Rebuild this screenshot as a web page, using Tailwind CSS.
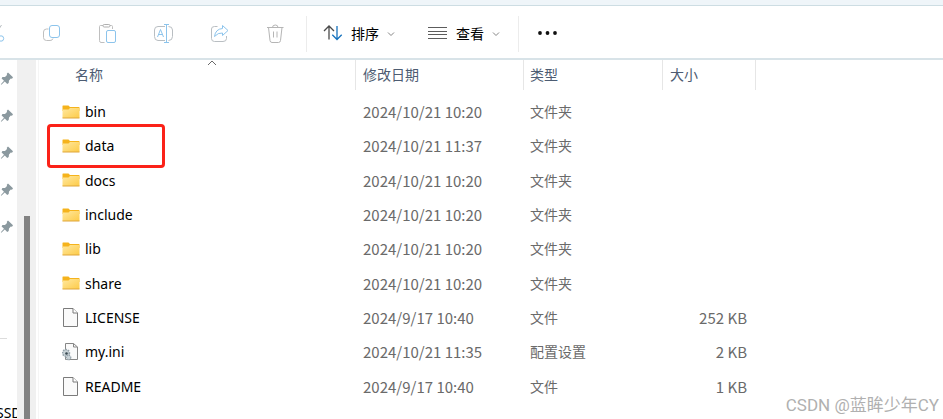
<!DOCTYPE html>
<html lang="zh-CN">
<head>
    <meta charset="UTF-8">
    <meta name="viewport" content="width=device-width, initial-scale=1.0">
    <title>文件资源管理器</title>
    <script src="https://cdn.jsdelivr.net/npm/@tailwindcss/browser@4"></script>
</head>
<body class="flex h-screen flex-col overflow-hidden bg-white font-['Noto_Sans','Noto_Sans_CJK_SC',sans-serif] text-sm text-black">
    <!-- 图标定义 -->
    <svg class="absolute size-0">
        <defs>
            <linearGradient id="folderFill" x1="0" y1="0" x2="1" y2="1">
                <stop offset="0" stop-color="#ffe8a0"/>
                <stop offset="1" stop-color="#fdcb48"/>
            </linearGradient>
        </defs>
        <symbol id="folder" viewBox="0 0 18 15">
            <path d="M.5 1Q.5 .5 1 .5H6.5L8 2H17Q17.500 2 17.500 2.500V6H.5Z" fill="#f5b31c"/>
            <path d="M.5 4.500H6.500L8 3H17.500V12.500Q17.500 13 17 13H1Q.5 13 .5 12.500Z" fill="url(#folderFill)"/>
            <path d="M.5 13H17.500" stroke="#dfa63a" stroke-width="1"/>
        </symbol>
        <symbol id="file" viewBox="0 0 18 20">
            <path d="M1.500.5H11L15.500 5V18.500H1.500Z" fill="#fafafa" stroke="#7b7b7b"/>
            <path d="M11 .5V5H15.500" fill="#fff" stroke="#7b7b7b"/>
        </symbol>
        <symbol id="ini" viewBox="0 0 18 20">
            <path d="M3.500 1.500H11.500L15.500 5V17.500H3.500Z" fill="#fafafa" stroke="#868686"/>
            <path d="M11.500 1.500V5H15.500" fill="none" stroke="#868686"/>
            <circle cx="4" cy="11" r="3.400" fill="#c9d3d8" stroke="#94a2aa" stroke-width="1.600" stroke-dasharray="1.5 1"/>
            <circle cx="4.500" cy="11.500" r="1.300" fill="#37474f"/>
            <circle cx="6.500" cy="15.500" r="2.300" fill="#c9d3d8" stroke="#94a2aa" stroke-width="1.200" stroke-dasharray="1.2 .8"/>
        </symbol>
        <symbol id="pin" viewBox="0 0 14 14">
            <path d="M8 .5 13 5.200 12 6.800 10.800 6.500 9 8.500 8.700 11 7.200 12 4.800 9.500 1.300 12.700 .8 12.300 4 8.700 1.600 6.400 2.400 5 5 4.900 7 2.900 6.800 1.800Z" fill="#8b999f"/>
        </symbol>
        <symbol id="chevron" viewBox="0 0 8 8">
            <path d="M1 2.500 4 5.500 7 2.500" fill="none" stroke="#858585"/>
        </symbol>
    </svg>

    <div class="h-[5px] shrink-0 bg-[#eff5f9]"></div>

    <!-- 工具栏 -->
    <div class="flex h-[55px] shrink-0 items-center border-t border-b-2 border-t-[#cddde3] border-b-[#d8e3e8] pt-1">
        <button class="-ml-8 flex w-14 justify-center" aria-label="剪切">
            <svg class="size-5" viewBox="0 0 20 20" fill="none">
                <path d="M5 1 13 13M15.500 1 8 13" stroke="#b9bec2"/>
                <circle cx="5.500" cy="14.500" r="2.700" stroke="#8cc4ec"/>
                <circle cx="15" cy="14.500" r="2.700" stroke="#8cc4ec"/>
            </svg>
        </button>
        <button class="flex w-14 justify-center" aria-label="复制">
            <svg class="size-5" viewBox="0 0 20 20" fill="none">
                <path d="M6.500 5H4.500Q1.500 5 1.500 8V13.500Q1.500 16.500 4.500 16.500H8Q10.500 16.500 11 14.500" stroke="#bfbfbf"/>
                <rect x="7.500" y="1.500" width="10" height="12" rx="2.500" stroke="#8cc4ec"/>
            </svg>
        </button>
        <button class="flex w-14 justify-center" aria-label="粘贴">
            <svg class="size-5" viewBox="0 0 20 20" fill="none">
                <path d="M5 1.500H2.500Q1.500 1.500 1.500 2.500V16.500Q1.500 18.500 3 18.500H6.500M12 1.500H13.500Q14.500 1.500 14.500 2.500V5" stroke="#bfbfbf"/>
                <rect x="5" y=".5" width="7" height="2.500" rx="1.200" stroke="#b0b0b0"/>
                <rect x="8.500" y="6.500" width="9" height="12" rx="1.500" stroke="#8cc4ec"/>
            </svg>
        </button>
        <button class="flex w-14 justify-center" aria-label="重命名">
            <svg class="size-5" viewBox="0 0 20 20" fill="none">
                <path d="M11 2.500H4Q.5 2.500 .5 6V12.500Q.5 16.500 4 16.500H11M14.500 2.500Q18.500 2.500 18.500 6V12.500Q18.500 16.500 14.500 16.500" stroke="#b9bec2"/>
                <path d="M3.500 13 6.500 5.500 9.500 13M4.500 10.500H8.500M12.500 .5V18.500M10 .5H15M10 18.500H15" stroke="#8cc4ec"/>
            </svg>
        </button>
        <button class="flex w-14 justify-center" aria-label="共享">
            <svg class="size-5" viewBox="0 0 20 20" fill="none" stroke-linejoin="round">
                <path d="M7.500 2.500H4.500Q1.500 2.500 1.500 5V14.500Q1.500 17.500 4.500 17.500H13Q16.500 17.500 16.500 14.500V12" stroke="#b9bec2"/>
                <path d="M12.500 1.500 18 6.500 12.500 11.500V9Q8 8.500 4.500 12.500Q5.500 5 12.500 4.500Z" stroke="#8cc4ec"/>
            </svg>
        </button>
        <button class="flex w-14 justify-center" aria-label="删除">
            <svg class="size-5" viewBox="0 0 20 20" fill="none" stroke="#b5b5b5">
                <path d="M1 3.500H17.500M6.500 3.500Q6.500 1 9.300 1Q12 1 12 3.500M2.500 3.500 4 16.500Q4.200 18.500 6 18.500H12.500Q14.300 18.500 14.500 16.500L16 3.500M7.500 7.500V13.500M11 7.500V13.500"/>
            </svg>
        </button>
        <div class="ml-0.5 h-9 w-px bg-[#ececec]"></div>
        <button class="ml-4 flex items-center">
            <svg class="size-5" viewBox="0 0 20 20" fill="none" stroke-width="1.300">
                <path d="M6 15.500V2M1 7 6 2 11 7" stroke="#4a4a4a"/>
                <path d="M14 2V15.500M9.300 10.800 14 15.500 18.700 10.800" stroke="#1672bd"/>
            </svg>
            <span class="ml-2">排序</span>
            <svg class="ml-2 size-2"><use href="#chevron"/></svg>
        </button>
        <button class="ml-[33px] flex items-center">
            <svg class="size-5" viewBox="0 0 20 20" stroke="#5c5c5c">
                <path d="M0 3.500H19M0 7.500H19M0 10.500H19M0 14.500H19"/>
            </svg>
            <span class="ml-2">查看</span>
            <svg class="ml-2 size-2"><use href="#chevron"/></svg>
        </button>
        <div class="ml-[18px] h-9 w-px bg-[#ececec]"></div>
        <button class="ml-[18px]" aria-label="更多">
            <svg class="size-5" viewBox="0 0 20 20" fill="#111">
                <circle cx="3" cy="9" r="1.900"/>
                <circle cx="10.500" cy="9" r="1.900"/>
                <circle cx="18" cy="9" r="1.900"/>
            </svg>
        </button>
    </div>

    <div class="flex min-h-0 flex-1">
        <!-- 导航栏 -->
        <nav class="flex w-[17px] shrink-0 flex-col overflow-hidden">
            <div class="flex h-[37px] shrink-0 items-center"><svg class="size-3.5"><use href="#pin"/></svg></div>
            <div class="flex h-[37px] shrink-0 items-center"><svg class="size-3.5"><use href="#pin"/></svg></div>
            <div class="flex h-[37px] shrink-0 items-center"><svg class="size-3.5"><use href="#pin"/></svg></div>
            <div class="flex h-[37px] shrink-0 items-center"><svg class="size-3.5"><use href="#pin"/></svg></div>
            <div class="flex h-[37px] shrink-0 items-center"><svg class="size-3.5"><use href="#pin"/></svg></div>
            <hr class="mt-[93px] w-[7px] shrink-0 border-[#dcdcdc]">
            <a href="#" class="-ml-1 mt-16 whitespace-nowrap">SSD</a>
        </nav>
        <div class="flex w-[19px] shrink-0 justify-center bg-[#f0f0f0]">
            <div class="mt-[156px] w-1.5 bg-[#828282]"></div>
        </div>

        <!-- 文件列表 -->
        <main class="ml-0.5 min-w-0 flex-1 border-l border-[#f5f5f5]">
            <table class="w-full table-fixed text-[#6a6a6a]">
                <colgroup>
                    <col class="w-[317px]">
                    <col class="w-[168px]">
                    <col class="w-[139px]">
                    <col class="w-[93px]">
                    <col>
                </colgroup>
                <thead class="text-left text-[#4d5c72]">
                    <tr>
                        <th class="relative p-0 pb-[5px] font-normal">
                            <div class="h-[30px] border-r border-[#e6e6e6] pl-9 leading-[30px]">名称</div>
                            <svg class="absolute top-0 left-[168px] h-1.5 w-2.5" viewBox="0 0 10 6" fill="none" stroke="#6a6a6a"><path d="M1 5 5 1 9 5"/></svg>
                        </th>
                        <th class="p-0 pb-[5px] font-normal"><div class="h-[30px] border-r border-[#e6e6e6] pl-[7px] leading-[30px]">修改日期</div></th>
                        <th class="p-0 pb-[5px] font-normal"><div class="h-[30px] border-r border-[#e6e6e6] pl-1.5 leading-[30px]">类型</div></th>
                        <th class="p-0 pb-[5px] font-normal"><div class="h-[30px] border-r border-[#e6e6e6] pl-[7px] leading-[30px]">大小</div></th>
                        <td></td>
                    </tr>
                </thead>
                <tbody id="files"></tbody>
            </table>
        </main>
    </div>

    <!-- 水印 -->
    <div class="absolute right-1 bottom-0.5 font-[Roboto,'Noto_Sans_CJK_SC',sans-serif] text-[17px] leading-6 text-[#b0b0b0]">CSDN @蓝眸少年CY</div>

    <script>
        const files = [
            { icon: 'folder', name: 'bin', date: '2024/10/21 10:20', type: '文件夹', size: '' },
            { icon: 'folder', name: 'data', date: '2024/10/21 11:37', type: '文件夹', size: '', marked: true },
            { icon: 'folder', name: 'docs', date: '2024/10/21 10:20', type: '文件夹', size: '' },
            { icon: 'folder', name: 'include', date: '2024/10/21 10:20', type: '文件夹', size: '' },
            { icon: 'folder', name: 'lib', date: '2024/10/21 10:20', type: '文件夹', size: '' },
            { icon: 'folder', name: 'share', date: '2024/10/21 10:20', type: '文件夹', size: '' },
            { icon: 'file', name: 'LICENSE', date: '2024/9/17 10:40', type: '文件', size: '252 KB' },
            { icon: 'ini', name: 'my.ini', date: '2024/10/21 11:35', type: '配置设置', size: '2 KB' },
            { icon: 'file', name: 'README', date: '2024/9/17 10:40', type: '文件', size: '1 KB' }
        ];

        // 文件行的生成
        document.getElementById('files').innerHTML = files.map(file => `
            <tr class="h-[34px] nth-[3n]:h-[35px]">
                <td class="relative p-0 pl-[23px]">
                    <div class="flex items-center text-black">
                        <svg class="${file.icon === 'folder' ? 'h-[15px] w-[18px]' : 'h-5 w-[18px]'}"><use href="#${file.icon}"/></svg>
                        <span class="ml-[5px]">${file.name}</span>
                    </div>
                    ${file.marked ? '<div class="absolute -top-[5px] left-2 h-11 w-[118px] rounded-sm border-3 border-[#fb2218]"></div>' : ''}
                </td>
                <td class="p-0 pl-[7px] font-['Noto_Sans_CJK_SC',sans-serif] text-[15px]">${file.date}</td>
                <td class="p-0 pl-1.5">${file.type}</td>
                <td class="p-0 pr-[9px] text-right font-['Noto_Sans_CJK_SC',sans-serif] text-[15px]">${file.size}</td>
                <td></td>
            </tr>
        `).join('');
    </script>
</body>
</html>
